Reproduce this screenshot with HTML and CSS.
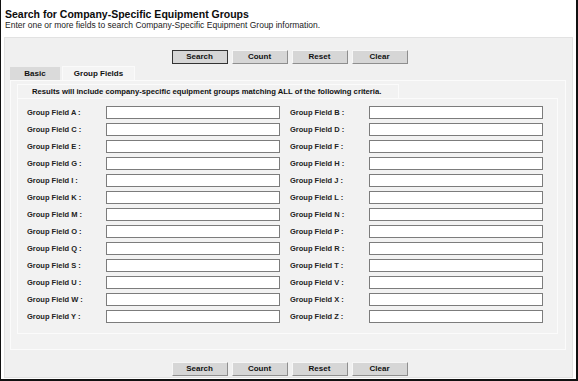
FILE: index.html
```html
<!DOCTYPE html>
<html>
<head>
<meta charset="utf-8">
<link rel="stylesheet" href="styles.css">
</head>
<body>
<div class="frame">
  <header class="head">
    <h1 class="title">Search for Company-Specific Equipment Groups</h1>
    <p class="sub">Enter one or more fields to search Company-Specific Equipment Group information.</p>
  </header>
  <div class="panel">
    <div class="btns">
      <button class="btn primary">Search</button>
      <button class="btn">Count</button>
      <button class="btn">Reset</button>
      <button class="btn">Clear</button>
    </div>
    <div class="tabs">
      <span class="tab">Basic</span>
      <span class="tab active">Group Fields</span>
    </div>
    <div class="pane">
      <div class="legend">Results will include company-specific equipment groups matching ALL of the following criteria.</div>
      <div class="box">
        <div class="grid">
          <label class="lbl">Group Field A :</label><input class="inp" type="text"><label class="lbl right">Group Field B :</label><input class="inp" type="text">
          <label class="lbl">Group Field C :</label><input class="inp" type="text"><label class="lbl right">Group Field D :</label><input class="inp" type="text">
          <label class="lbl">Group Field E :</label><input class="inp" type="text"><label class="lbl right">Group Field F :</label><input class="inp" type="text">
          <label class="lbl">Group Field G :</label><input class="inp" type="text"><label class="lbl right">Group Field H :</label><input class="inp" type="text">
          <label class="lbl">Group Field I :</label><input class="inp" type="text"><label class="lbl right">Group Field J :</label><input class="inp" type="text">
          <label class="lbl">Group Field K :</label><input class="inp" type="text"><label class="lbl right">Group Field L :</label><input class="inp" type="text">
          <label class="lbl">Group Field M :</label><input class="inp" type="text"><label class="lbl right">Group Field N :</label><input class="inp" type="text">
          <label class="lbl">Group Field O :</label><input class="inp" type="text"><label class="lbl right">Group Field P :</label><input class="inp" type="text">
          <label class="lbl">Group Field Q :</label><input class="inp" type="text"><label class="lbl right">Group Field R :</label><input class="inp" type="text">
          <label class="lbl">Group Field S :</label><input class="inp" type="text"><label class="lbl right">Group Field T :</label><input class="inp" type="text">
          <label class="lbl">Group Field U :</label><input class="inp" type="text"><label class="lbl right">Group Field V :</label><input class="inp" type="text">
          <label class="lbl">Group Field W :</label><input class="inp" type="text"><label class="lbl right">Group Field X :</label><input class="inp" type="text">
          <label class="lbl">Group Field Y :</label><input class="inp" type="text"><label class="lbl right">Group Field Z :</label><input class="inp" type="text">
        </div>
      </div>
    </div>
    <div class="btns bottom">
      <button class="btn">Search</button>
      <button class="btn">Count</button>
      <button class="btn">Reset</button>
      <button class="btn">Clear</button>
    </div>
  </div>
</div>
</body>
</html>
```

FILE: styles.css
```css
html, body {
  margin: 0;
  padding: 0;
  background: #ffffff;
}
.frame {
  box-sizing: border-box;
  width: 578px;
  height: 381px;
  border-left: 1px solid #111;
  border-right: 2px solid #111;
  border-bottom: 2px solid #111;
  display: flex;
  flex-direction: column;
  font-family: "Liberation Sans", Arial, sans-serif;
  color: #111;
}
.head {
  height: 37px;
  box-sizing: border-box;
  padding: 8px 0 0 4px;
  background: #fff;
}
.title {
  margin: 0;
  font-size: 10.5px;
  line-height: 12px;
  font-weight: bold;
  color: #0c0c0c;
}
.sub {
  margin: 0;
  font-size: 8.5px;
  line-height: 11px;
  color: #222;
}
.panel {
  flex: 1;
  margin: 0 3px 1px 3px;
  background: #f0f0f0;
  border: 1px solid #e2e2e2;
  padding: 12px 6px 0 5px;
  display: flex;
  flex-direction: column;
}
.btns {
  display: flex;
  justify-content: center;
  gap: 4px;
  padding-left: 3px;
}
.btn {
  width: 56px;
  height: 14px;
  padding: 0;
  margin: 0;
  box-sizing: border-box;
  background: #d6d6d6;
  border: 1px solid;
  border-color: #f6f6f6 #8e8e8e #8e8e8e #f6f6f6;
  font-family: "Liberation Sans", Arial, sans-serif;
  font-weight: bold;
  font-size: 8px;
  line-height: 12px;
  color: #111;
}
.btn.primary {
  border: 1px solid #333;
}
.tabs {
  display: flex;
  gap: 2px;
  margin-top: 3px;
  height: 13px;
  align-items: flex-end;
}
.tab {
  box-sizing: border-box;
  height: 13px;
  width: 50px;
  background: #dadada;
  font-weight: bold;
  font-size: 8px;
  line-height: 13px;
  text-align: center;
}
.tab.active {
  width: 73px;
  height: 14px;
  background: #f4f4f4;
  border: 1px solid #fafafa;
  border-bottom: none;
  line-height: 13px;
}
.pane {
  height: 270px;
  box-sizing: border-box;
  background: #f2f2f2;
  border: 1px solid #fbfbfb;
  padding: 3px 7px 0 6px;
}
.legend {
  box-sizing: border-box;
  width: 382px;
  height: 14px;
  border: 1px solid #fbfbfb;
  border-bottom: none;
  background: #f2f2f2;
  font-weight: bold;
  font-size: 7.7px;
  line-height: 13px;
  padding-left: 14px;
  color: #111;
}
.box {
  box-sizing: border-box;
  height: 236px;
  border: 1px solid #fbfbfb;
  padding: 7px 0 0 9px;
}
.grid {
  display: grid;
  grid-template-columns: 79px 174px 89px 174px;
  row-gap: 4px;
}
.lbl {
  font-weight: bold;
  font-size: 7.5px;
  line-height: 13px;
  color: #222;
  white-space: nowrap;
}
.lbl.right {
  padding-left: 10px;
}
.inp {
  box-sizing: border-box;
  width: 174px;
  height: 13px;
  margin: 0;
  padding: 0;
  border: 1px solid #7c7c7c;
  background: #fff;
}
.btns.bottom {
  margin-top: 12px;
}
```
